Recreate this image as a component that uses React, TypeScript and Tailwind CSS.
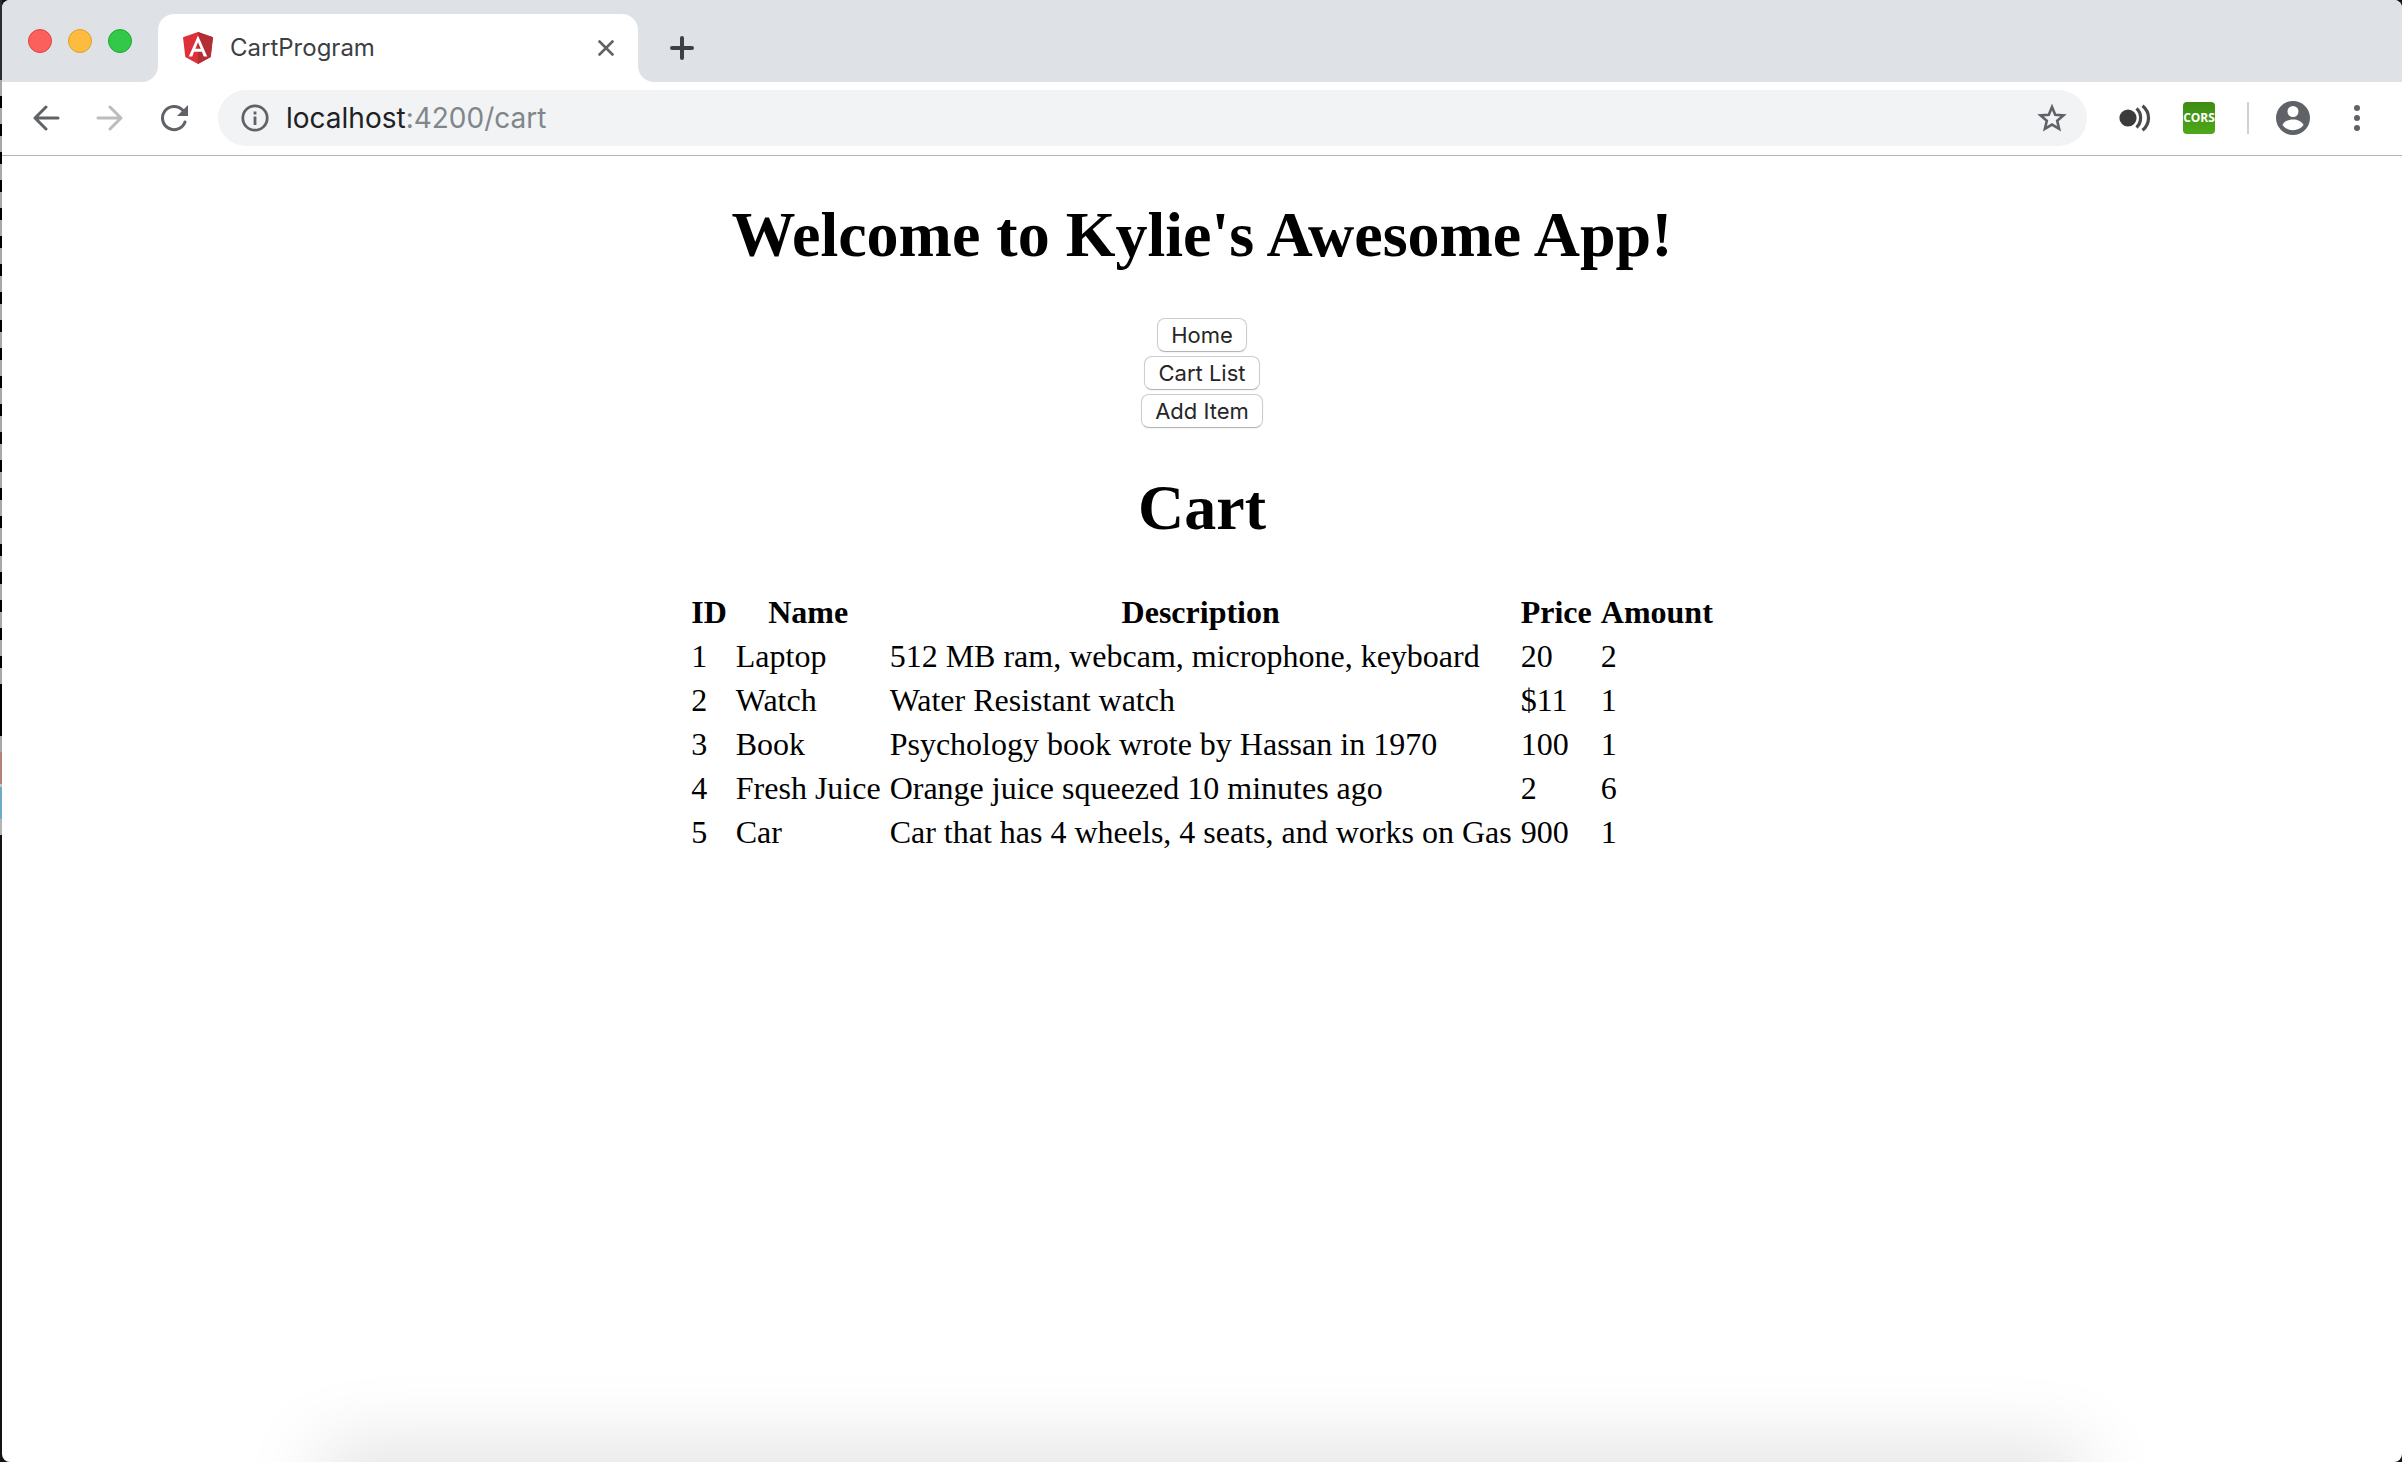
import React from "react";

const items = [
  { id: 1, name: "Laptop", description: "512 MB ram, webcam, microphone, keyboard", price: "20", amount: 2 },
  { id: 2, name: "Watch", description: "Water Resistant watch", price: "$11", amount: 1 },
  { id: 3, name: "Book", description: "Psychology book wrote by Hassan in 1970", price: "100", amount: 1 },
  { id: 4, name: "Fresh Juice", description: "Orange juice squeezed 10 minutes ago", price: "2", amount: 6 },
  { id: 5, name: "Car", description: "Car that has 4 wheels, 4 seats, and works on Gas", price: "900", amount: 1 },
];

function AngularLogo() {
  return (
    <svg viewBox="0 0 30 32" className="h-8 w-[30px] shrink-0" aria-hidden="true">
      <path d="M15 0 30 5.3 27.7 25 15 32 2.3 25 0 5.3Z" fill="#dd3039" />
      <path d="M15 0 30 5.3 27.7 25 15 32Z" fill="#b22e34" />
      <path d="M15 3.6 5.8 24.4h3.5l1.8-4.7h7.8l1.8 4.7h3.5ZM15 10.3l2.7 6.5h-5.4Z" fill="#fff" fillRule="evenodd" />
    </svg>
  );
}

function TabStrip() {
  return (
    <header className="flex h-[82px] bg-[#dee1e6]">
      <div className="flex w-[156px] shrink-0 gap-4 rounded-br-2xl pt-[29px] pl-[26px]">
        <button aria-label="Close window" className="size-6 rounded-full border border-[#e0443e] bg-[#fc605c]" />
        <button aria-label="Minimize window" className="size-6 rounded-full border border-[#dea123] bg-[#fdbc40]" />
        <button aria-label="Zoom window" className="size-6 rounded-full border border-[#1aab29] bg-[#34c84a]" />
      </div>
      <div className="relative mt-[14px] flex w-[480px] items-center rounded-t-2xl bg-white pr-5 pl-[25px]">
        <svg viewBox="0 0 16 16" className="absolute bottom-0 -left-4 size-4" aria-hidden="true">
          <path d="M16 0v16H0A16 16 0 0 0 16 0Z" fill="#fff" />
        </svg>
        <svg viewBox="0 0 16 16" className="absolute -right-4 bottom-0 size-4" aria-hidden="true">
          <path d="M0 0v16h16A16 16 0 0 1 0 0Z" fill="#fff" />
        </svg>
        <AngularLogo />
        <span className="ml-[17px] flex-1 font-[Inter,sans-serif] text-2xl text-[#3c4043]">CartProgram</span>
        <button aria-label="Close tab" className="p-1">
          <svg viewBox="0 0 16 16" className="size-4" stroke="#5f6368" strokeWidth="2.6" strokeLinecap="round">
            <path d="M1.5 1.5l13 13M14.5 1.5l-13 13" />
          </svg>
        </button>
      </div>
      <button aria-label="New tab" className="ml-8 self-center pt-[14px]">
        <svg viewBox="0 0 24 24" className="size-6" stroke="#3c4043" strokeWidth="4" strokeLinecap="round">
          <path d="M12 2v20M2 12h20" />
        </svg>
      </button>
    </header>
  );
}

function Toolbar() {
  return (
    <div className="flex h-[74px] items-center border-b border-[#b1b3b5] bg-white pr-9 pb-px pl-[30px]">
      <button aria-label="Back" className="shrink-0">
        <svg viewBox="0 0 28 26" className="h-[26px] w-7" fill="none" stroke="#5f6368" strokeWidth="3" strokeLinecap="round" strokeLinejoin="round">
          <path d="M26 13H3M14 2 3 13l11 11" />
        </svg>
      </button>
      <button aria-label="Forward" className="ml-9 shrink-0">
        <svg viewBox="0 0 28 26" className="h-[26px] w-7" fill="none" stroke="#babcbe" strokeWidth="3" strokeLinecap="round" strokeLinejoin="round">
          <path d="M2 13h23M14 2l11 11-11 11" />
        </svg>
      </button>
      <button aria-label="Reload" className="ml-9 shrink-0">
        <svg viewBox="0 0 28 28" className="size-7" fill="none" stroke="#5f6368" strokeWidth="3" strokeLinecap="round">
          <path d="M25 18A11.6 11.6 0 1 1 22.5 6" />
          <path d="M28 1v11H17Z" fill="#5f6368" stroke="none" />
        </svg>
      </button>
      <div className="ml-[30px] flex h-14 flex-1 items-center rounded-full bg-[#f1f3f4] pr-5 pl-[23px]">
        <svg viewBox="0 0 28 28" className="size-7 shrink-0" fill="none" stroke="#5f6368" strokeWidth="2.8" aria-hidden="true">
          <circle cx="14" cy="14" r="12.2" />
          <path d="M14 12.5V21M14 7.4v3" />
        </svg>
        <a href="#cart" className="ml-[17px] flex-1 font-[Inter,sans-serif] text-[28px] text-[#202124]">
          localhost<span className="text-[#80868b]">:4200/cart</span>
        </a>
        <button aria-label="Bookmark this page">
          <svg viewBox="0 0 30 28" className="h-7 w-[30px]" fill="none" stroke="#5f6368" strokeWidth="2.6">
            <path d="m15 3 3.2 7.7 8.3.7-6.3 5.4 1.9 8.1-7.1-4.3-7.1 4.3 1.9-8.1-6.3-5.4 8.3-.7Z" />
          </svg>
        </button>
      </div>
      <button aria-label="Screen reader" className="ml-8 shrink-0">
        <svg viewBox="0 0 32 28" className="h-7 w-8" fill="none" stroke="#4a4a4a" strokeWidth="3.2">
          <circle cx="9" cy="14" r="8.6" fill="#3b3b3b" stroke="none" />
          <path d="M17.5 4.5c5.5 4.5 5.5 14 0 19M23.5 1.8c8 6.5 8 18 0 24.5" />
        </svg>
      </button>
      <button
        aria-label="CORS extension"
        className="ml-8 flex size-8 shrink-0 items-center justify-center rounded-sm bg-linear-to-b from-[#3c8c12] to-[#4fa81b]"
      >
        <svg viewBox="0 0 32 32" className="size-8" aria-hidden="true">
          <text x="16" y="20" textAnchor="middle" fill="#fff" fontFamily="Liberation Sans Narrow, Open Sans, sans-serif" fontWeight="700" fontSize="12">
            CORS
          </text>
        </svg>
      </button>
      <div className="ml-8 h-8 w-[2px] shrink-0 bg-[#cfd1d3]" />
      <button aria-label="Profile" className="ml-[27px] shrink-0">
        <svg viewBox="0 0 34 34" className="size-[34px]">
          <circle cx="17" cy="17" r="17" fill="#5f6368" />
          <circle cx="17" cy="10.5" r="5.5" fill="#fff" />
          <path d="M6.5 24C8 20.5 12.5 18.5 17 18.5S26 20.5 27.5 24C25.2 27.2 21.5 29.2 17 29.2S8.800 27.2 6.5 24Z" fill="#fff" />
        </svg>
      </button>
      <button aria-label="Menu" className="ml-[38px] shrink-0">
        <svg viewBox="0 0 18 26" className="h-[26px] w-[18px]" fill="#5f6368">
          <circle cx="9" cy="3" r="3" />
          <circle cx="9" cy="13" r="3" />
          <circle cx="9" cy="23" r="3" />
        </svg>
      </button>
    </div>
  );
}

function NavButton({ children }: { children: React.ReactNode }) {
  return (
    <button className="h-[34px] rounded-lg border border-[#cdcdcd] border-b-[#b4b4b4] bg-white px-[13px] font-[Inter,sans-serif] text-[22px] leading-8 text-[#262626] shadow-xs">
      {children}
    </button>
  );
}

/* The sliver of the window behind that shows at the left edge of the desktop. */
function BackgroundWindowEdge() {
  return (
    <div className="w-[2px] shrink-0 bg-[#111318]">
      <div className="h-20 bg-[#2b2c31]" />
      <div className="h-[604px] bg-[repeating-linear-gradient(#a8a8a8_0_16px,#000_16px_28px)]" />
      <div className="h-[52px] bg-black" />
      <div className="h-4 bg-[#a8a8a8]" />
      <div className="h-8 bg-[#b5827a]" />
      <div className="h-[3px] bg-[#c4c4c4]" />
      <div className="h-8 bg-[#6cabc6]" />
      <div className="h-4 bg-[#b4b4b4]" />
    </div>
  );
}

export default function App() {
  return (
    <div className="flex min-h-screen bg-[#111318]">
      <BackgroundWindowEdge />
      <div className="relative flex flex-1 flex-col overflow-hidden rounded-lg bg-white">
        <TabStrip />
        <Toolbar />
        <main className="flex flex-col items-center font-['Liberation_Serif',serif] text-[32px] leading-9 text-black">
          <h1 className="mt-[42px] text-[64px] leading-[74px] font-bold">Welcome to Kylie's Awesome App!</h1>
          <nav className="mt-[46px] flex flex-col items-center gap-1">
            <NavButton>Home</NavButton>
            <NavButton>Cart List</NavButton>
            <NavButton>Add Item</NavButton>
          </nav>
          <h2 className="mt-[43px] text-[64px] leading-[74px] font-bold">Cart</h2>
          <table className="mt-[43px] border-separate border-spacing-x-[5px] border-spacing-y-1">
            <thead>
              <tr>
                {["ID", "Name", "Description", "Price", "Amount"].map((label) => (
                  <th key={label} className="p-[2px] text-center font-bold">
                    {label}
                  </th>
                ))}
              </tr>
            </thead>
            <tbody>
              {items.map((item) => (
                <tr key={item.id}>
                  <td className="p-[2px]">{item.id}</td>
                  <td className="p-[2px]">{item.name}</td>
                  <td className="p-[2px]">{item.description}</td>
                  <td className="p-[2px]">{item.price}</td>
                  <td className="p-[2px]">{item.amount}</td>
                </tr>
              ))}
            </tbody>
          </table>
        </main>
        <div className="pointer-events-none absolute inset-x-[330px] top-full h-10 shadow-[0_0_80px_10px_rgba(0,0,0,0.15)]" />
      </div>
    </div>
  );
}
